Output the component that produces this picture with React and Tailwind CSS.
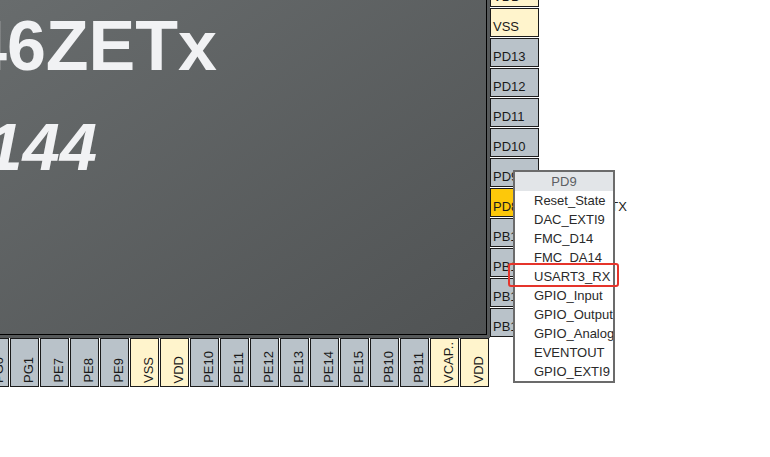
const rightPins = [
  { name: "VDD", tone: "pale" },
  { name: "VSS", tone: "pale" },
  { name: "PD13" },
  { name: "PD12" },
  { name: "PD11" },
  { name: "PD10" },
  { name: "PD9" },
  { name: "PD8", tone: "hot", label: "USART3_TX" },
  { name: "PB15" },
  { name: "PB14" },
  { name: "PB13" },
  { name: "PB12" },
];

const bottomPins = [
  { name: "PG0" },
  { name: "PG1" },
  { name: "PE7" },
  { name: "PE8" },
  { name: "PE9" },
  { name: "VSS", tone: "pale" },
  { name: "VDD", tone: "pale" },
  { name: "PE10" },
  { name: "PE11" },
  { name: "PE12" },
  { name: "PE13" },
  { name: "PE14" },
  { name: "PE15" },
  { name: "PB10" },
  { name: "PB11" },
  { name: "VCAP..", tone: "pale" },
  { name: "VDD", tone: "pale" },
];

const modes = [
  "Reset_State",
  "DAC_EXTI9",
  "FMC_D14",
  "FMC_DA14",
  "USART3_RX",
  "GPIO_Input",
  "GPIO_Output",
  "GPIO_Analog",
  "EVENTOUT",
  "GPIO_EXTI9",
];

function toneClass(tone) {
  if (tone === "pale") return "bg-[#fff4cc]";
  if (tone === "hot") return "bg-[#fdc80a]";
  return "bg-[#b9c2c9]";
}

function SidePin({ pin }) {
  return (
    <div className="flex items-end">
      <div
        className={`h-[29px] w-[49px] shrink-0 border border-[#1b1b1b] flex items-end pl-[2px] pb-[2px] overflow-hidden whitespace-nowrap text-[13px] leading-[15px] text-[#1a1a1a] ${toneClass(pin.tone)}`}
      >
        {pin.name}
      </div>
      {pin.label && (
        <span className="ml-[13px] pb-[3px] whitespace-nowrap text-[13px] leading-[15px] text-[#222]">
          {pin.label}
        </span>
      )}
    </div>
  );
}

function BottomPin({ pin }) {
  return (
    <div
      className={`w-[29px] h-[49px] shrink-0 border border-[#1b1b1b] flex items-end justify-end pr-[2px] pb-[3px] overflow-hidden ${toneClass(pin.tone)}`}
    >
      <span className="[writing-mode:vertical-rl] rotate-180 whitespace-nowrap text-[13px] leading-[15px] text-[#1a1a1a]">
        {pin.name}
      </span>
    </div>
  );
}

export default function App() {
  return (
    <div className="relative w-[770px] h-[457px] overflow-hidden bg-white font-['Liberation_Sans',Arial,sans-serif]">
      <div className="flex">
        {/* chip body */}
        <div className="w-[490px] h-[338px] shrink-0 bg-[#56595a] pr-[3px] pb-[3px]">
          <div className="h-full border-r border-b border-black bg-linear-to-br from-[#686c6d] to-[#505354] text-[#f1f2f4] font-bold">
            <div className="w-[217px] flex justify-end pt-[11px]">
              <span className="whitespace-nowrap text-[70px] leading-[70px]">STM32F446ZETx</span>
            </div>
            <div className="w-[97px] flex justify-end mt-[32px]">
              <span className="whitespace-nowrap italic text-[67px] leading-[67px]">LQFP144</span>
            </div>
          </div>
        </div>

        {/* right side pins */}
        <div className="flex flex-col gap-[1px] mt-[-22px]">
          {rightPins.map((p, i) => (
            <SidePin key={i} pin={p} />
          ))}
        </div>
      </div>

      {/* bottom pins */}
      <div className="flex gap-[1px] ml-[-20px]">
        {bottomPins.map((p, i) => (
          <BottomPin key={i} pin={p} />
        ))}
      </div>

      {/* pin mode menu */}
      <div className="absolute left-[513px] top-[170px] w-[102px] border-2 border-[#6b6b6b] bg-white overflow-hidden text-[13px] leading-[19px]">
        <div className="h-[19px] bg-[#e2e5e8] text-center text-[#5c5f63]">PD9</div>
        {modes.map((m) => (
          <div key={m} className="h-[19px] pl-[19px] whitespace-nowrap text-[#2a2a2a]">
            {m}
          </div>
        ))}
      </div>

      {/* highlight */}
      <div className="absolute left-[508px] top-[263px] w-[111px] h-[24px] border-2 border-[#e5342b] rounded-[3px]" />
    </div>
  );
}
